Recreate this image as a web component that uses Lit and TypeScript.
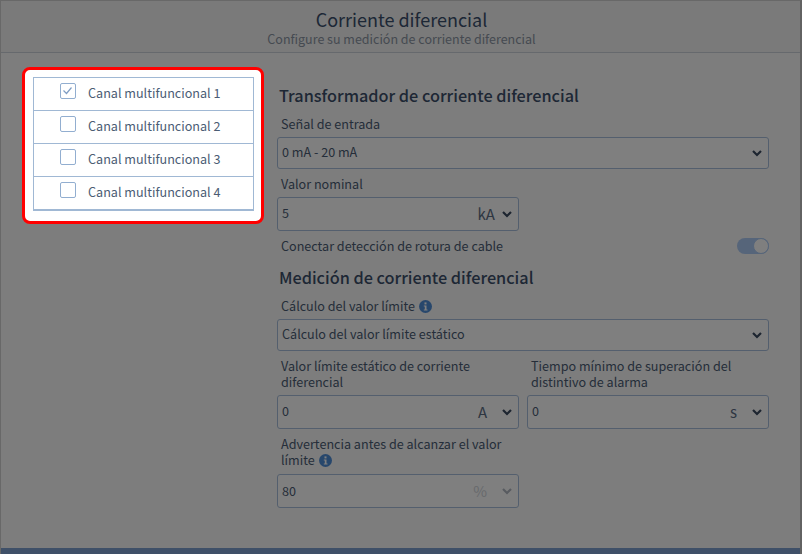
import { LitElement, html, css } from "lit";
import { customElement } from "lit/decorators.js";

const chevron = html`<svg class="chev" width="12" height="8" viewBox="0 0 12 8"><path d="M2 2l4 4 4-4" fill="none" stroke="currentColor" stroke-width="2.2"/></svg>`;
const info = html`<svg class="info" width="13" height="13" viewBox="0 0 13 13"><circle cx="6.5" cy="6.5" r="6.5" fill="#4f8ed8"/><rect x="5.5" y="2.4" width="2" height="2" fill="#fff"/><path d="M4.8 5.4h2.7v4h1v1.2H4.8V9.4h1V6.6h-1z" fill="#fff"/></svg>`;

@customElement("app-root")
export class AppRoot extends LitElement {
  static styles = css`
    :host { display: block; width: 802px; height: 554px; overflow: hidden; position: relative; background: #fff;
      font-family: "Noto Sans CJK SC", "Noto Sans", sans-serif; font-size: 12.6px; line-height: 16px; color: #4b5c74; }
    * { box-sizing: border-box; }
    .page { height: 554px; display: flex; flex-direction: column; border: 1px solid #d0d0d0; border-bottom: 0; border-right: 2px solid #c4c4c4; }
    .head { height: 52px; flex: none; text-align: center; border-bottom: 1px solid #ccd2da; background: #f4f4f4; padding: 7px 0 0 2px; }
    .head h1 { margin: 0; font-size: 18px; line-height: 22px; font-weight: 400; color: #3a4f6c; }
    .head p { margin: 0; font-size: 12.5px; line-height: 17px; color: #8b95a3; }
    .main { flex: 1; display: flex; background: #fafafa; }
    .left { width: 276px; flex: none; padding: 14px 0 0 21px; }
    .spot { position: relative; z-index: 2; width: 242px; height: 157px; background: #fff; border: 3px solid #f00; border-radius: 8px; padding: 7px 7px 7px 8px; }
    .list { border: 1px solid #a0b8d4; border-bottom-width: 2px; }
    .row { height: 33px; display: flex; align-items: center; border-bottom: 1px solid #a0b8d4; padding-left: 26px; gap: 12px; }
    .row:last-child { border-bottom: 0; height: 32px; }
    .row span:last-child { margin-top: -2px; }
    .box { width: 16px; height: 16px; margin-top: -6px; border: 1.5px solid #92aed0; border-radius: 2px; background: #fff; display: block; }
    .box svg { display: block; }
    .right { flex: 1; padding: 32px 31px 0 0; min-width: 0; }
    h2 { margin: 0; font-size: 16.25px; line-height: 20px; font-weight: 500; color: #3c4f6a; padding-left: 2px; }
    label { display: block; padding-left: 4px; line-height: 16px; margin-top: 7px; }
    h2 + label { margin-top: 11px; }
    .w { width: 242px; }
    .ctl { margin-top: 5px; height: 32px; border: 1px solid #a9bfdc; border-radius: 3px; display: flex; align-items: center; padding: 0 5px 0 4px; background: #fff; }
    .ctl span.v { flex: 1; padding-bottom: 2px; }
    .chev { color: #3a4a60; display: block; flex: none; }
    .unit { font-size: 15px; margin-right: 14px; color: #5d6d84; }
    .ka { margin-right: 6px; }
    .dis { color: #d0d4da; }
    .dis ~ .chev { color: #b0b6c0; }
    .sm { width: 242px; height: 34px; }
    .last { margin-top: 6px; }
    .last span.v { padding-bottom: 0; }
    .tog { display: flex; justify-content: space-between; align-items: center; margin-top: 5px; padding-left: 4px; height: 18px; }
    .tog > span:first-child { margin-top: 2px; }
    .switch { width: 32px; height: 16px; border-radius: 8px; background: #accaf4; position: relative; margin-top: 2px; }
    .switch i { position: absolute; right: 0; top: 0; width: 16px; height: 16px; border-radius: 50%; background: #fff; border: 1px solid #accaf4; }
    .s2 { margin-top: 13px; }
    .two { display: grid; grid-template-columns: 242px 242px; gap: 8px; }
    .ov { position: absolute; inset: 0; background: rgba(0,0,0,.5); z-index: 1; }
    .bar { height: 6px; flex: none; background: #7fa0d0; }
    .info { vertical-align: -2px; margin-left: 1px; }
  `;

  render() {
    return html`
      <div class="page">
        <div class="head"><h1>Corriente diferencial</h1><p>Configure su medición de corriente diferencial</p></div>
        <div class="main">
          <div class="left">
            <div class="spot"><div class="list">
              ${[1, 2, 3, 4].map((n) => html`<div class="row">
                <span class="box">${n === 1 ? html`<svg width="13" height="13" viewBox="0 0 13 13"><path d="M2.5 6.5l3 3 5-6" fill="none" stroke="#7f9dc4" stroke-width="1.2"/></svg>` : ""}</span>
                <span>Canal multifuncional ${n}</span></div>`)}
            </div></div>
          </div>
          <div class="right">
            <h2>Transformador de corriente diferencial</h2>
            <label>Señal de entrada</label>
            <div class="ctl"><span class="v">0 mA - 20 mA</span>${chevron}</div>
            <label>Valor nominal</label>
            <div class="ctl sm"><span class="v">5</span><span class="unit ka">kA</span>${chevron}</div>
            <div class="tog"><span>Conectar detección de rotura de cable</span><span class="switch"><i></i></span></div>
            <h2 class="s2">Medición de corriente diferencial</h2>
            <label>Cálculo del valor límite ${info}</label>
            <div class="ctl"><span class="v">Cálculo del valor límite estático</span>${chevron}</div>
            <div class="two">
              <div><label>Valor límite estático de corriente diferencial</label>
                <div class="ctl sm"><span class="v">0</span><span class="unit">A</span>${chevron}</div></div>
              <div><label>Tiempo mínimo de superación del distintivo de alarma</label>
                <div class="ctl sm"><span class="v">0</span><span class="unit">s</span>${chevron}</div></div>
            </div>
            <label class="w">Advertencia antes de alcanzar el valor límite ${info}</label>
            <div class="ctl sm last"><span class="v">80</span><span class="unit dis">%</span>${chevron}</div>
          </div>
        </div>
        <div class="bar"></div>
      </div>
      <div class="ov"></div>
    `;
  }
}
